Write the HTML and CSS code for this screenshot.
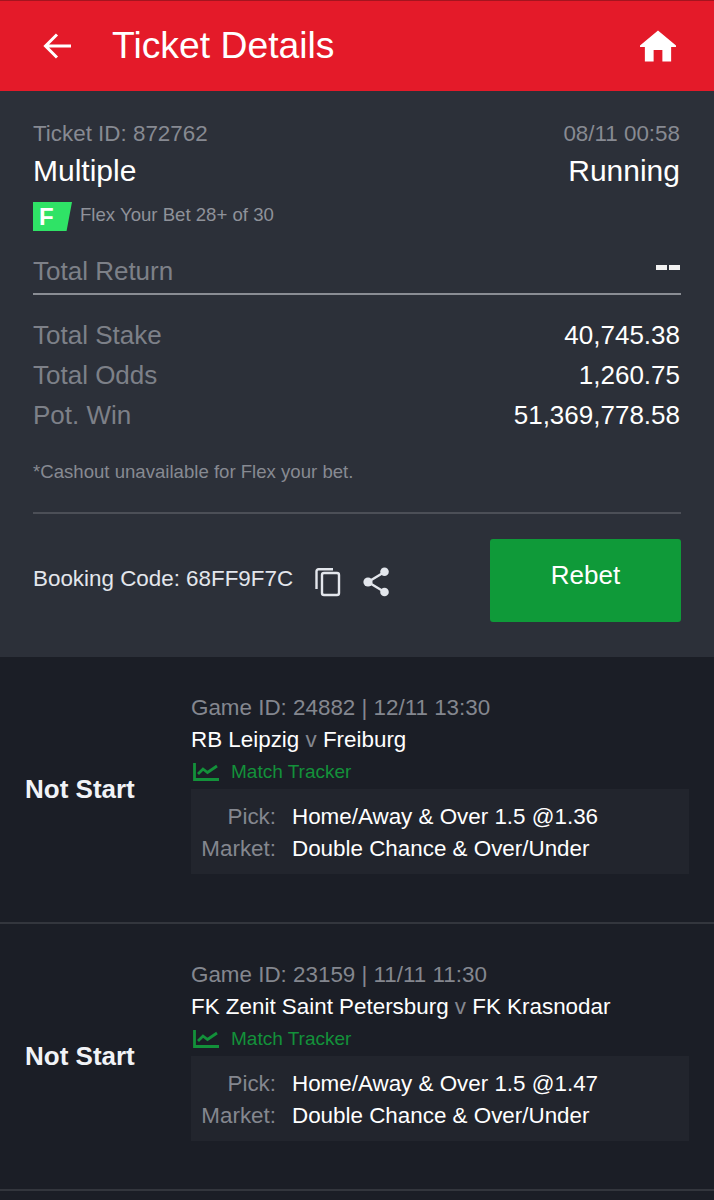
FILE: index.html
```html
<!DOCTYPE html>
<html lang="en">
<head>
    <meta charset="UTF-8">
    <meta name="viewport" content="width=device-width, initial-scale=1.0">
    <title>Ticket Details</title>
    <link rel="stylesheet" href="styles.css">
</head>
<body>

<header class="top-bar">
    <svg class="back-icon" viewBox="0 0 30 30"><path d="M30 15H5M16 3.500L4.500 15 16 26.500" fill="none" stroke="#fff" stroke-width="3"/></svg>
    <h1 class="page-title">Ticket Details</h1>
    <svg class="home-icon" viewBox="0 0 37 32"><path d="M18.500 0L37 15.500V17H32V32H23V20H14V32H5V17H0V15.500Z" fill="#fff"/></svg>
</header>

<section class="summary">
    <div class="row ticket-id">
        <span>Ticket ID: 872762</span>
        <span>08/11 00:58</span>
    </div>
    <div class="row ticket-type">
        <span>Multiple</span>
        <span>Running</span>
    </div>
    <div class="flex-line">
        <span class="flex-badge">F</span>
        <span class="flex-text">Flex Your Bet 28+ of 30</span>
    </div>
    <div class="row total-return">
        <span>Total Return</span>
        <span class="dashes"><i></i><i></i></span>
    </div>
    <div class="row amount">
        <span>Total Stake</span>
        <span class="value">40,745.38</span>
    </div>
    <div class="row amount">
        <span>Total Odds</span>
        <span class="value">1,260.75</span>
    </div>
    <div class="row amount">
        <span>Pot. Win</span>
        <span class="value">51,369,778.58</span>
    </div>
    <p class="cashout-note">*Cashout unavailable for Flex your bet.</p>
    <div class="booking">
        <span class="booking-code">Booking Code: 68FF9F7C</span>
        <svg class="copy-icon" viewBox="0 0 26 30"><path d="M18 2.200H3.500a2 2 0 0 0-2 2V22" fill="none" stroke="#e3e6ec" stroke-width="2.400"/><rect x="7" y="6" width="17" height="22" rx="2" fill="none" stroke="#e3e6ec" stroke-width="2.400"/></svg>
        <svg class="share-icon" viewBox="0 0 28 30"><path d="M21.500 5L5 15l16.500 10" fill="none" stroke="#e3e6ec" stroke-width="2.400"/><circle cx="21.500" cy="4.700" r="4.300" fill="#e3e6ec"/><circle cx="5" cy="15" r="4.600" fill="#e3e6ec"/><circle cx="21.500" cy="25" r="4.300" fill="#e3e6ec"/></svg>
        <button class="rebet">Rebet</button>
    </div>
</section>

<section class="game">
    <div class="game-status">Not Start</div>
    <div class="game-info">
        <div class="game-id">Game ID: 24882 | 12/11 13:30</div>
        <div class="teams">RB Leipzig <span class="versus">v</span> Freiburg</div>
        <div class="tracker">
            <svg class="tracker-icon" viewBox="0 0 26 18"><path d="M1.500 0V16.500H26M5 11l5-5 4.500 3.500L24 3" fill="none" stroke="#13913a" stroke-width="2.800"/></svg>
            <span>Match Tracker</span>
        </div>
        <div class="pick-box">
            <span class="label">Pick:</span><span>Home/Away &amp; Over 1.5 @1.36</span>
            <span class="label">Market:</span><span>Double Chance &amp; Over/Under</span>
        </div>
    </div>
</section>

<section class="game">
    <div class="game-status">Not Start</div>
    <div class="game-info">
        <div class="game-id">Game ID: 23159 | 11/11 11:30</div>
        <div class="teams">FK Zenit Saint Petersburg <span class="versus">v</span> FK Krasnodar</div>
        <div class="tracker">
            <svg class="tracker-icon" viewBox="0 0 26 18"><path d="M1.500 0V16.500H26M5 11l5-5 4.500 3.500L24 3" fill="none" stroke="#13913a" stroke-width="2.800"/></svg>
            <span>Match Tracker</span>
        </div>
        <div class="pick-box">
            <span class="label">Pick:</span><span>Home/Away &amp; Over 1.5 @1.47</span>
            <span class="label">Market:</span><span>Double Chance &amp; Over/Under</span>
        </div>
    </div>
</section>

</body>
</html>
```

FILE: styles.css
```css
html, body {
    margin: 0;
    padding: 0;
}
body {
    width: 714px;
    height: 1200px;
    overflow: hidden;
    background-color: #1b1e26;
    font-family: "Liberation Sans", Arial, sans-serif;
    color: #ffffff;
}

/* red title bar */
.top-bar {
    display: flex;
    align-items: center;
    height: 91px;
    padding: 0 38px 0 41px;
    box-sizing: border-box;
    background-color: #e41a29;
    border-top: 1px solid #a5141f;
}
.back-icon {
    width: 30px;
    height: 30px;
    margin-right: 41px;
}
.page-title {
    flex: 1;
    margin: 0 0 1px;
    font-size: 37.3px;
    font-weight: normal;
}
.home-icon {
    width: 36px;
    height: 32px;
}

/* ticket summary */
.summary {
    height: 566px;
    padding: 29px 33px 0;
    box-sizing: border-box;
    background-color: #2c3039;
}
.row {
    display: flex;
    justify-content: space-between;
}
.ticket-id {
    padding-right: 1px;
    font-size: 22.4px;
    line-height: 28px;
    color: #878a92;
}
.ticket-type {
    margin-top: 6px;
    padding-right: 1px;
    font-size: 30px;
    line-height: 34px;
}
.flex-line {
    display: flex;
    align-items: center;
    margin-top: 14px;
    font-size: 18.6px;
    color: #8f929a;
}
.flex-text {
    margin-bottom: 4px;
}
.flex-badge {
    width: 39px;
    height: 29px;
    margin-right: 8px;
    padding-left: 6px;
    box-sizing: border-box;
    background-color: #2fe366;
    clip-path: polygon(0 0, 100% 0, 86% 100%, 0 100%);
    color: #ffffff;
    font-size: 24px;
    font-weight: bold;
    line-height: 29px;
}
.total-return {
    align-items: center;
    margin-top: 18px;
    height: 44px;
    border-bottom: 2px solid #8a8d94;
    font-size: 26px;
    color: #7d8088;
}
.dashes {
    display: flex;
    gap: 2px;
    margin: 0 1px 8px 0;
}
.dashes i {
    width: 11px;
    height: 5px;
    background-color: #f2f2f2;
}
.amount {
    padding-right: 1px;
    font-size: 26px;
    line-height: 40px;
    color: #7d8088;
}
.total-return + .amount {
    margin-top: 20px;
}
.value {
    color: #ffffff;
}
.cashout-note {
    margin: 26px 0 0;
    padding-bottom: 30px;
    border-bottom: 2px solid #4c4f57;
    font-size: 18.6px;
    line-height: 21px;
    color: #878a92;
}
.booking {
    display: flex;
    align-items: center;
    margin-top: 25px;
}
.booking-code {
    margin-bottom: 4px;
    font-size: 22.4px;
    color: #e3e6ec;
}
.copy-icon {
    width: 26px;
    height: 30px;
    margin: 2px 0 0 22px;
}
.share-icon {
    width: 28px;
    height: 30px;
    margin: 2px 0 0 22px;
}
.rebet {
    width: 191px;
    height: 83px;
    margin-left: auto;
    padding: 0 0 10px;
    border: 0;
    border-radius: 3px;
    background-color: #0f9a39;
    color: #ffffff;
    font-family: inherit;
    font-size: 26px;
}

/* game rows */
.game {
    display: flex;
    align-items: center;
    height: 267px;
    box-sizing: border-box;
    padding: 0 25px;
    border-bottom: 2px solid #33363d;
}
.game-status {
    width: 166px;
    flex: none;
    font-size: 26px;
    font-weight: bold;
    color: #f1f3f7;
}
.game-info {
    flex: 1;
    margin-bottom: 13px;
    font-size: 22.4px;
}
.game-id {
    line-height: 30px;
    color: #84878f;
}
.teams {
    margin-top: 2px;
    line-height: 30px;
}
.versus {
    color: #84878f;
}
.tracker {
    display: flex;
    align-items: center;
    margin-top: 1px;
    height: 33px;
    font-size: 19px;
    color: #13913a;
}
.tracker-icon {
    width: 26px;
    height: 18px;
    margin: 0 12px 0 2px;
}
.pick-box {
    display: grid;
    grid-template-columns: 85px 1fr;
    column-gap: 16px;
    padding: 12px 0 9px;
    background-color: #22252d;
    line-height: 32px;
}
.label {
    text-align: right;
    color: #84878f;
}
```
